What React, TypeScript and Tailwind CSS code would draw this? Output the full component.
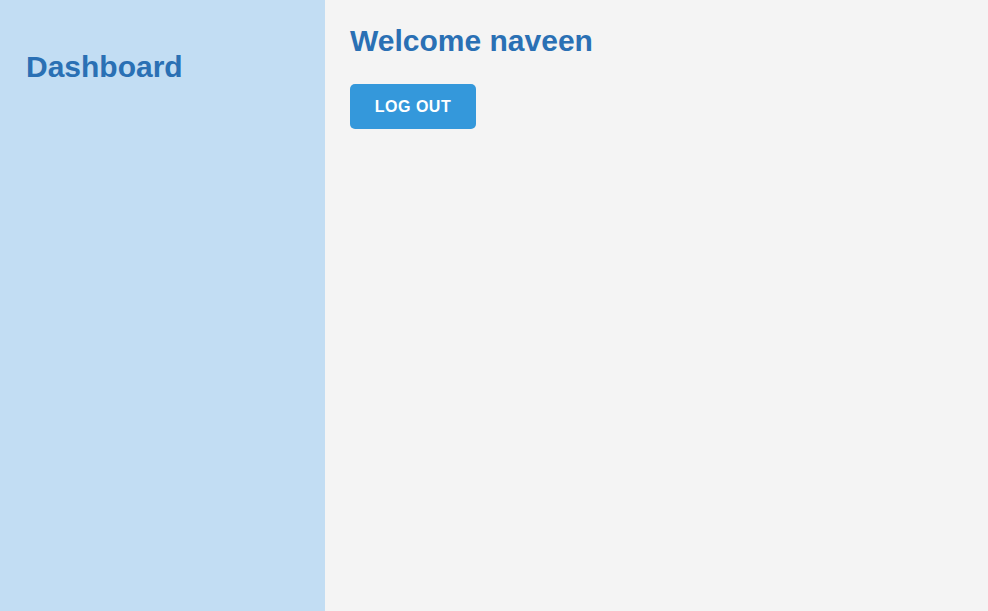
export default function App() {
  return (
    <div className="flex h-[611px] w-full font-['Liberation_Sans',Arial,sans-serif]">
      <aside className="w-[325px] shrink-0 bg-[#c2ddf3] pl-[26px] pt-[49px]">
        <h2 className="text-[30px] font-bold leading-[36px] text-[#2a70b4]">Dashboard</h2>
      </aside>
      <main className="flex-1 bg-[#f4f4f4] pl-[25px] pt-[23px]">
        <h1 className="text-[30px] font-bold leading-[36px] text-[#2a70b4]">Welcome naveen</h1>
        <button className="mt-[25px] flex h-[45px] w-[126px] items-center justify-center rounded-[5px] bg-[#3498db] text-base font-bold tracking-[0.5px] text-white">
          LOG OUT
        </button>
      </main>
    </div>
  );
}
